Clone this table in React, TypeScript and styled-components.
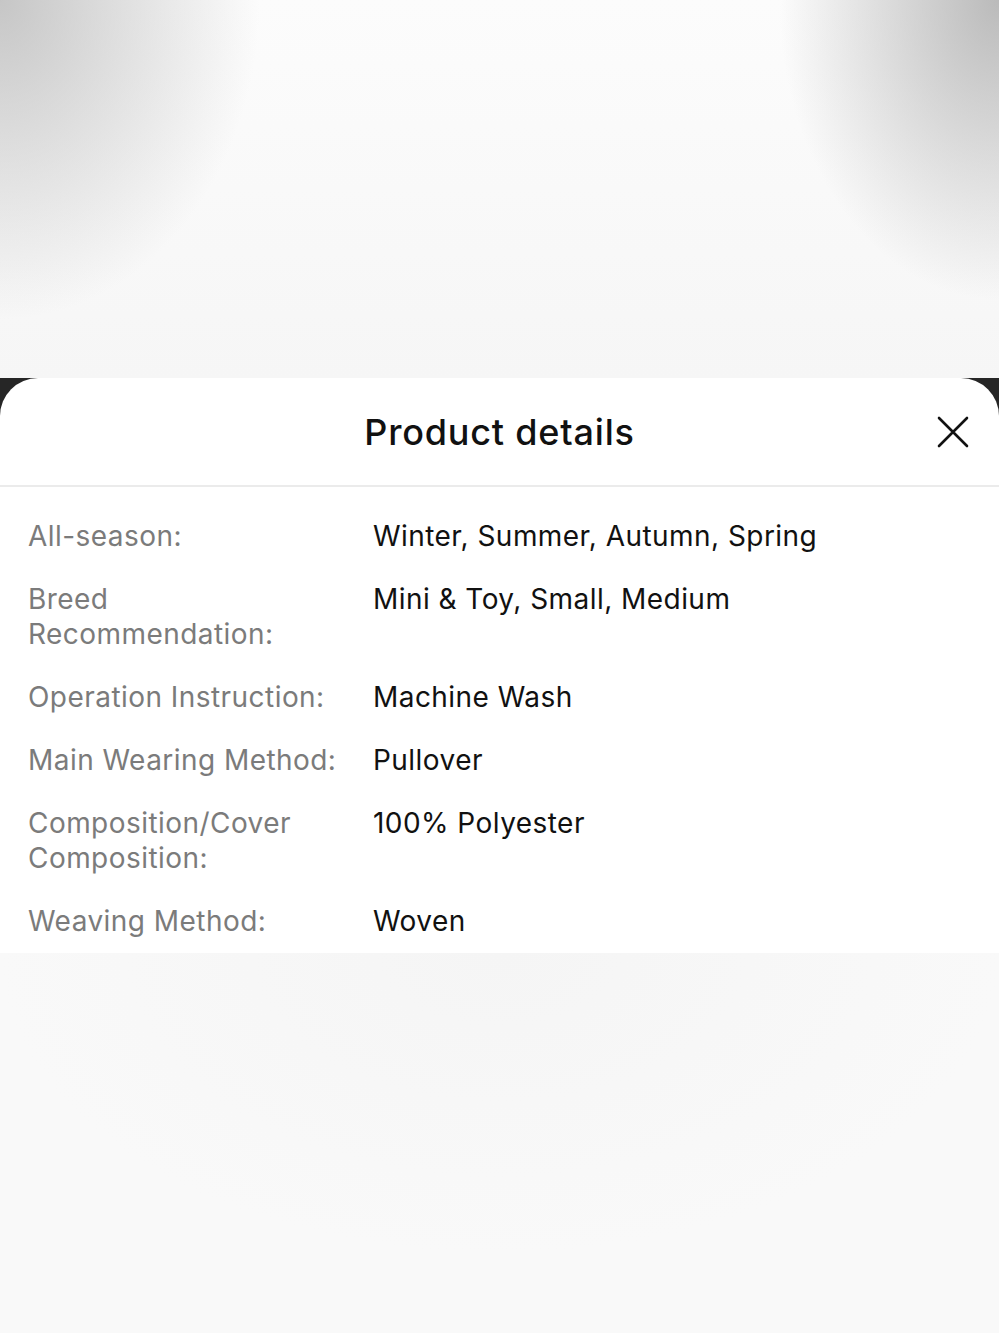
import styled, { createGlobalStyle } from 'styled-components';

type Detail = { label: string; value: string };

const details: Detail[] = [
  { label: 'All-season:', value: 'Winter, Summer, Autumn, Spring' },
  { label: 'Breed Recommendation:', value: 'Mini & Toy, Small, Medium' },
  { label: 'Operation Instruction:', value: 'Machine Wash' },
  { label: 'Main Wearing Method:', value: 'Pullover' },
  { label: 'Composition/Cover Composition:', value: '100% Polyester' },
  { label: 'Weaving Method:', value: 'Woven' },
];

const GlobalStyle = createGlobalStyle`
  html, body {
    margin: 0;
    padding: 0;
    background: #f8f8f8;
  }
  body {
    font-family: Inter, "Noto Sans", "Liberation Sans", sans-serif;
    -webkit-font-smoothing: antialiased;
  }
`;

const App = (): JSX.Element => {
  return (
    <Page>
      <GlobalStyle />
      <Backdrop />
      <SheetFrame>
        <Sheet>
          <Header>
            <Title>Product details</Title>
            <CloseButton aria-label="Close">
              <svg width="32" height="32" viewBox="0 0 32 32" fill="none">
                <path d="M2 2 L30 30 M30 2 L2 30" stroke="#111" strokeWidth="2.6" strokeLinecap="round" />
              </svg>
            </CloseButton>
          </Header>
          <List>
            {details.map((d, i) => (
              <Row key={`row_${i}`}>
                <Label>{d.label}</Label>
                <Value>{d.value}</Value>
              </Row>
            ))}
          </List>
        </Sheet>
      </SheetFrame>
      <Bottom />
    </Page>
  );
};

export default App;

const Page = styled.div`
  width: 999px;
  min-height: 1333px;
  display: flex;
  flex-direction: column;
  background: #f8f8f8;
`;

const Backdrop = styled.div`
  height: 378px;
  background:
    radial-gradient(ellipse 260px 320px at 0 0, rgba(180, 180, 180, 0.75), rgba(200, 200, 200, 0) 100%),
    radial-gradient(ellipse 220px 300px at 100% 0, rgba(170, 170, 170, 0.8), rgba(200, 200, 200, 0) 100%),
    linear-gradient(#fcfcfc, #f6f6f6);
`;

const SheetFrame = styled.div`
  background: linear-gradient(#262626 0, #262626 40px, #f8f8f8 40px);
`;

const Sheet = styled.div`
  background: #fff;
  border-radius: 38px 38px 0 0;
`;

const Header = styled.div`
  position: relative;
  height: 107px;
  display: flex;
  align-items: center;
  justify-content: center;
  border-bottom: 2px solid #ebebeb;
`;

const Title = styled.h1`
  margin: 0;
  padding-top: 0;
  font-size: 36px;
  font-weight: 500;
  color: #111;
  letter-spacing: 0.8px;
`;

const CloseButton = styled.button`
  position: absolute;
  right: 30px;
  top: 38px;
  width: 32px;
  height: 32px;
  padding: 0;
  border: none;
  background: none;
  display: flex;
`;

const List = styled.div`
  padding-top: 18px;
  display: flex;
  flex-direction: column;
`;

const Row = styled.div`
  display: grid;
  grid-template-columns: 317px 1fr;
  column-gap: 28px;
  padding: 14px 28px;
  font-size: 28px;
  line-height: 35px;
  letter-spacing: 0.45px;
`;

const Label = styled.div`
  color: #7b7b7b;
`;

const Value = styled.div`
  color: #111;
`;

const Bottom = styled.div`
  flex: 1;
  background:
    radial-gradient(ellipse 500px 300px at 50% 0, #f5f5f5, rgba(248, 248, 248, 0) 100%),
    #f9f9f9;
`;
